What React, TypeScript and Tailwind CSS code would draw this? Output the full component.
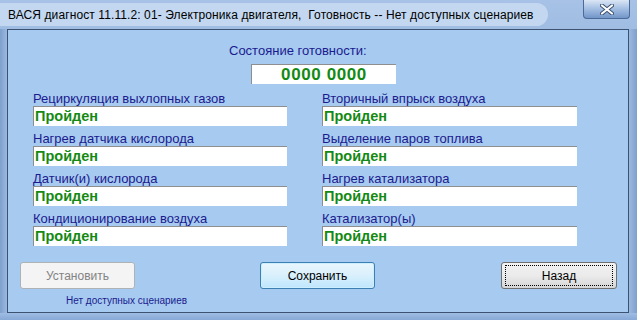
import React from "react";

interface MonitorProps {
  label: string;
  value: string;
}

const Monitor = ({ label, value }: MonitorProps) => {
  return (
    <div className="mt-[6px] first:mt-0">
      <div className="h-[14px] whitespace-nowrap text-[13px] leading-[14px] text-[#1b1b8e]">{label}</div>
      <div className="h-[20px] border-t border-l border-[#8e8e8e] bg-white pl-[1px] text-[14.5px] font-bold leading-[19px] text-[#148a14]">
        {value}
      </div>
    </div>
  );
};

const leftItems = [
  "Рециркуляция выхлопных газов",
  "Нагрев датчика кислорода",
  "Датчик(и) кислорода",
  "Кондиционирование воздуха",
];

const rightItems = [
  "Вторичный впрыск воздуха",
  "Выделение паров топлива",
  "Нагрев катализатора",
  "Катализатор(ы)",
];

const App = () => {
  return (
    <div
      className="flex h-[320px] w-[637px] flex-col overflow-hidden bg-gradient-to-b from-[#a7c2e6] via-[#7fa3d2] to-[#9dbde4]"
      style={{ fontFamily: '"Liberation Sans", Arial, sans-serif' }}
    >
      {/* title bar */}
      <div className="flex h-[29px] items-start justify-between">
        <div className="mt-[3px] flex h-[23px] items-center whitespace-nowrap rounded-r-full bg-[#c3d8f0] pl-[8px] pr-[14px] text-[12px] tracking-[0.1px] text-black">
          ВАСЯ диагност 11.11.2: 01- Электроника двигателя,&nbsp; Готовность -- Нет доступных сценариев
        </div>
        <div className="mr-[7px] flex h-[19px] w-[47px] shrink-0 items-center justify-center rounded-b-[4px] border border-t-0 border-[#4c6a98] bg-gradient-to-b from-[#dbe6f4] via-[#a2bde2] to-[#7396c9]">
          <svg width="14" height="11" viewBox="0 0 14 11">
            <path d="M2 1.5 L12 9.5 M12 1.5 L2 9.5" stroke="#3a4f70" strokeWidth="4" strokeLinecap="round" />
            <path d="M2 1.5 L12 9.5 M12 1.5 L2 9.5" stroke="#ffffff" strokeWidth="2.2" strokeLinecap="round" />
          </svg>
        </div>
      </div>

      <div className="flex flex-1">
        <div className="w-[7px] bg-gradient-to-r from-[#7f9fcc] to-[#9ab9e1]" />
        {/* client */}
        <div className="flex-1 border border-[#3d5171] bg-[#a6caf0] pr-[1px]">
          <div className="ml-[221px] mt-[14px] h-[14px] text-[13px] leading-[14px] text-[#1b1b8e]">
            Состояние готовности:
          </div>
          <div className="ml-[243px] mt-[6px] flex h-[20px] w-[145px] items-center justify-center border-t border-l border-[#8e8e8e] bg-white text-[17px] font-bold tracking-[0.6px] text-[#148a14]">
            0000 0000
          </div>

          <div className="ml-[25px] mt-[8px] grid w-[544px] grid-cols-[254px_255px] gap-x-[35px]">
            <div className="flex flex-col">
              {leftItems.map((l) => (
                <Monitor key={l} label={l} value="Пройден" />
              ))}
            </div>
            <div className="flex flex-col">
              {rightItems.map((l) => (
                <Monitor key={l} label={l} value="Пройден" />
              ))}
            </div>
          </div>

          <div className="mt-[16px] flex items-start">
            <div className="ml-[12px] flex w-[115px] flex-col">
              <button className="h-[27px] w-[115px] rounded-[3px] border border-[#adb2b5] bg-[#f4f4f4] text-[12px] text-[#838383]">
                Установить
              </button>
              <div className="ml-[46px] mt-[4px] whitespace-nowrap text-[10px] text-[#1b1b8e]">
                Нет доступных сценариев
              </div>
            </div>
            <button className="ml-[125px] h-[27px] w-[115px] rounded-[3px] border border-[#3c7fb1] bg-gradient-to-b from-[#eaf6fd] via-[#d9f0fc] to-[#bee6fd] text-[12px] text-black shadow-[inset_0_0_0_1px_#cdeefd]">
              Сохранить
            </button>
            <button className="ml-[126px] flex h-[27px] w-[116px] items-center justify-center rounded-[3px] border border-[#707070] bg-gradient-to-b from-[#f2f2f2] via-[#ebebeb] to-[#d6d6d6] text-[12px] text-black">
              <span className="flex h-[21px] w-[108px] items-center justify-center border border-dotted border-black">
                Назад
              </span>
            </button>
          </div>
        </div>
        <div className="w-[8px] bg-gradient-to-l from-[#7f9fcc] to-[#9ab9e1]" />
      </div>
      <div className="h-[7px] bg-gradient-to-b from-[#9ebde4] to-[#88a9d6]" />
    </div>
  );
};

export default App;
